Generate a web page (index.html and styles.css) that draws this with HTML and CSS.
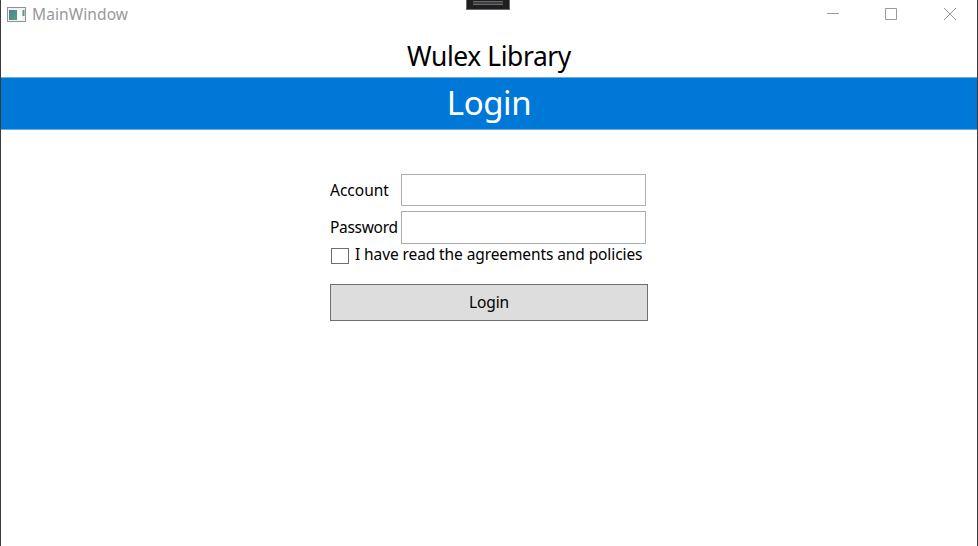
FILE: index.html
```html
<!DOCTYPE html>
<html lang="en">
<head>
<meta charset="utf-8">
<title>MainWindow</title>
<link rel="stylesheet" href="styles.css">
</head>
<body>
<div class="window">
  <header class="titlebar">
    <svg class="app-icon" width="19" height="15" viewBox="0 0 19 15">
      <defs><linearGradient id="pane" x1="0" y1="0" x2="1" y2="1"><stop offset="0" stop-color="#4a80a0"/><stop offset="1" stop-color="#58a078"/></linearGradient></defs>
      <rect x=".5" y=".5" width="18" height="14" fill="#f2f2f2" stroke="#929292"/>
      <rect x="2" y="3" width="8" height="10" fill="url(#pane)"/>
      <rect x="11" y="3" width="4" height="10" fill="#fff"/>
      <rect x="15.5" y="3" width="2" height="6" fill="#5c9a88"/>
    </svg>
    <span class="caption">MainWindow</span>
    <div class="controls">
      <svg class="minimize" width="12" height="12" viewBox="0 0 12 12"><path d="M0 5.5h12"/></svg>
      <svg width="12" height="12" viewBox="0 0 12 12"><path d="M.5.5h11v11H.5z"/></svg>
      <svg width="12" height="12" viewBox="0 0 12 12"><path d="M0 0l12 12M12 0L0 12"/></svg>
    </div>
  </header>
  <div class="debug-tab"><div class="grip"></div></div>
  <h1 class="heading"><span>Wulex Library</span></h1>
  <div class="band"><span>Login</span></div>
  <form class="form">
    <div class="field"><label for="account" class="account">Account</label><input id="account" type="text"></div>
    <div class="field tall"><label for="password" class="password">Password</label><input id="password" type="password"></div>
    <label class="agree"><input type="checkbox"><span>I have read the agreements and policies</span></label>
    <button type="button"><span>Login</span></button>
  </form>
</div>
</body>
</html>
```
FILE: styles.css
```css
* { box-sizing: border-box; }
body { margin: 0; background: #fff; font-family: "Noto Sans", "Open Sans", sans-serif; color: #000; }
.window { height: 546px; border: solid #3c3c3e; border-width: 0 1px; overflow: hidden; }
.titlebar { display: flex; align-items: center; height: 28px; padding: 0 21px 0 6px; }
.app-icon { margin-right: 6px; }
.caption { font-size: 15.5px; color: #999; line-height: 28px; letter-spacing: .1px; }
.controls { display: flex; gap: 47px; margin-left: auto; }
.controls svg { fill: none; stroke: #999; }
.controls .minimize { margin-right: -1px; }
.debug-tab { position: absolute; left: 466px; top: 0; width: 44px; height: 10px; background: #1f1f20; border: 1px solid #68686a; border-top: 0; }
.grip { width: 30px; height: 4px; margin: 1px auto 0; background: #3e3e42; border: solid #68686a; border-width: 1px 0; }
.heading { height: 49px; margin: 0; font-size: 26.4px; font-weight: 400; line-height: 56px; text-align: center; letter-spacing: -.4px; }
.band { height: 53px; background: #0078d7; border: solid #69aee7; border-width: 1px 0; color: #fff; font-size: 33px; line-height: 50px; text-align: center; letter-spacing: -.4px; }
.form { width: 318px; margin: 44px 0 0 329px; font-size: 15.5px; letter-spacing: -.1px; }
.field { display: flex; align-items: center; height: 32px; margin-bottom: 5px; }
.field.tall { height: 33px; margin-bottom: 0; }
.field label { width: 71px; white-space: nowrap; }
.field .account { letter-spacing: 0; }
.field .password { margin-top: -1px; letter-spacing: -.3px; }
.field input { width: 245px; height: 100%; margin: 0; padding: 0 4px; border: 1px solid #abadb3; background: #fff; outline: 0; font: inherit; }
.agree { display: flex; height: 22px; line-height: 20px; white-space: nowrap; }
.agree input { appearance: none; width: 18px; height: 16px; margin: 4px 6px 0 1px; border: 1px solid #707070; background: #fff; }
button { display: block; width: 318px; height: 37px; margin: 18px 0 0; padding: 0 0 1px; border: 1px solid #707070; background: #ddd; color: #000; font: inherit; letter-spacing: -.1px; }
```
